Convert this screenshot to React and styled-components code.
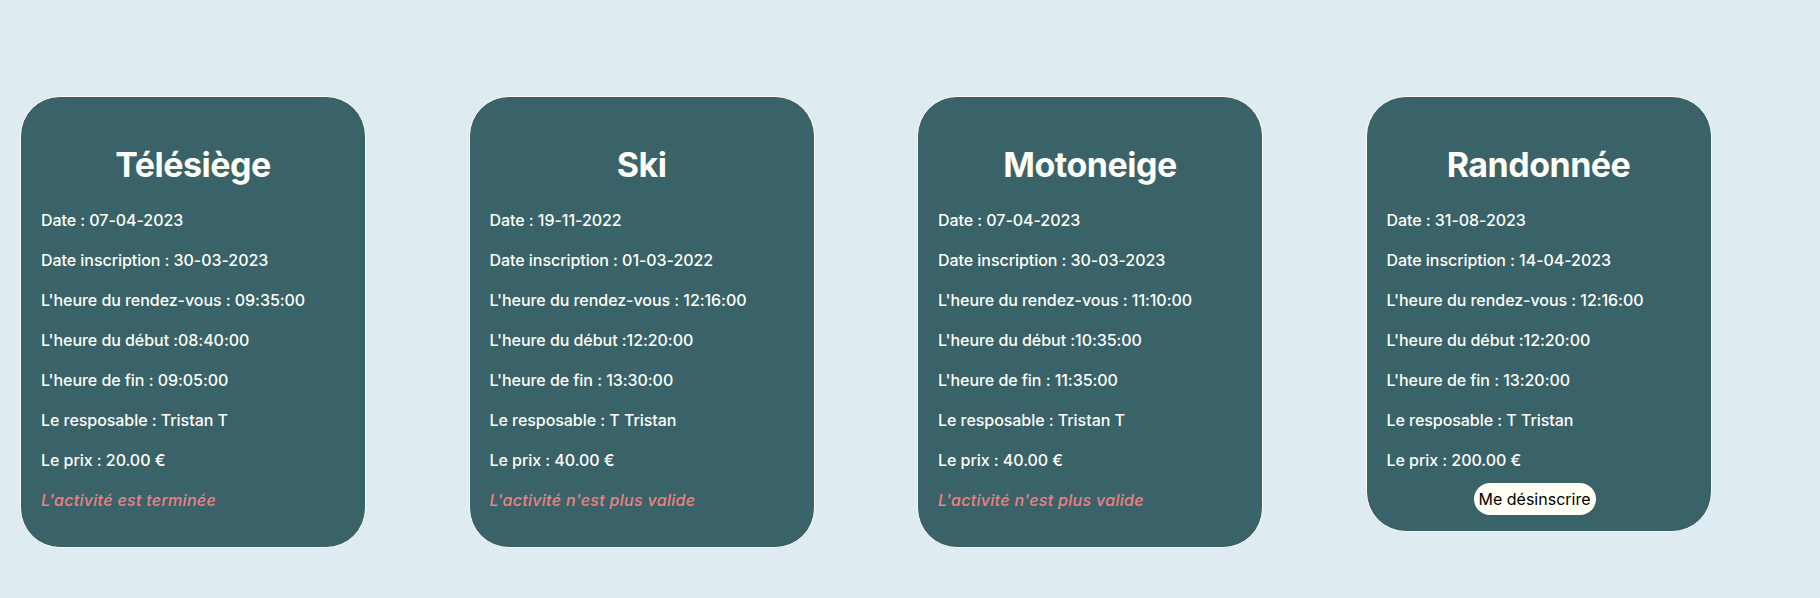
import React from "react";
import styled, { createGlobalStyle } from "styled-components";

const GlobalStyle = createGlobalStyle`
  html, body {
    margin: 0;
    padding: 0;
    background: #deebf0;
  }
  body {
    font-family: Inter, "Noto Sans", sans-serif;
  }
`;

const Page = styled.main`
  min-height: 598px;
  box-sizing: border-box;
  padding: 96px 20px 0 20px;
  background: #deebf0;
`;

const Row = styled.div`
  display: flex;
  align-items: flex-start;
  gap: 102.5px;
`;

const Card = styled.section`
  box-sizing: border-box;
  width: 346px;
  display: flex;
  flex-direction: column;
  padding: 0 20px 16px 20px;
  background: #396369;
  border: 1px solid #fffdf2;
  border-radius: 40px;
  color: #fffef6;
`;

const Title = styled.h2`
  margin: 46px 0 21px 0;
  font-size: 34px;
  line-height: 44px;
  font-weight: 700;
  text-align: center;
  letter-spacing: -0.5px;
`;

const Lines = styled.div`
  display: flex;
  flex-direction: column;
  gap: 16px;
`;

const Line = styled.p`
  margin: 0;
  font-size: 16px;
  line-height: 24px;
  font-weight: 500;
  letter-spacing: -0.05px;
  white-space: nowrap;
`;

const Status = styled(Line)`
  margin-bottom: 19px;
  color: #f08080;
  font-style: italic;
  letter-spacing: 0.3px;
`;

const Button = styled.button`
  align-self: center;
  margin-top: -5px;
  margin-right: 8px;
  height: 32px;
  padding: 0 5px;
  border: none;
  border-radius: 16px;
  background: #fffff5;
  color: #000;
  font-family: Inter, "Noto Sans", sans-serif;
  font-size: 16px;
  font-weight: 400;
  letter-spacing: 0;
  cursor: pointer;
`;

const activities = [
  {
    name: "Télésiège",
    date: "07-04-2023",
    inscription: "30-03-2023",
    rdv: "09:35:00",
    debut: "08:40:00",
    fin: "09:05:00",
    resp: "Tristan T",
    prix: "20.00",
    status: "L'activité est terminée",
  },
  {
    name: "Ski",
    date: "19-11-2022",
    inscription: "01-03-2022",
    rdv: "12:16:00",
    debut: "12:20:00",
    fin: "13:30:00",
    resp: "T Tristan",
    prix: "40.00",
    status: "L'activité n'est plus valide",
  },
  {
    name: "Motoneige",
    date: "07-04-2023",
    inscription: "30-03-2023",
    rdv: "11:10:00",
    debut: "10:35:00",
    fin: "11:35:00",
    resp: "Tristan T",
    prix: "40.00",
    status: "L'activité n'est plus valide",
  },
  {
    name: "Randonnée",
    date: "31-08-2023",
    inscription: "14-04-2023",
    rdv: "12:16:00",
    debut: "12:20:00",
    fin: "13:20:00",
    resp: "T Tristan",
    prix: "200.00",
    status: null,
  },
];

function ActivityCard({ a }) {
  return (
    <Card>
      <Title>{a.name}</Title>
      <Lines>
        <Line>Date : {a.date}</Line>
        <Line>Date inscription : {a.inscription}</Line>
        <Line>L'heure du rendez-vous : {a.rdv}</Line>
        <Line>L'heure du début :{a.debut}</Line>
        <Line>L'heure de fin : {a.fin}</Line>
        <Line>Le resposable : {a.resp}</Line>
        <Line>Le prix : {a.prix} €</Line>
        {a.status ? (
          <Status>{a.status}</Status>
        ) : (
          <Button type="button">Me désinscrire</Button>
        )}
      </Lines>
    </Card>
  );
}

export default function App() {
  return (
    <>
      <GlobalStyle />
      <Page>
        <Row>
          {activities.map((a) => (
            <ActivityCard key={a.name} a={a} />
          ))}
        </Row>
      </Page>
    </>
  );
}
